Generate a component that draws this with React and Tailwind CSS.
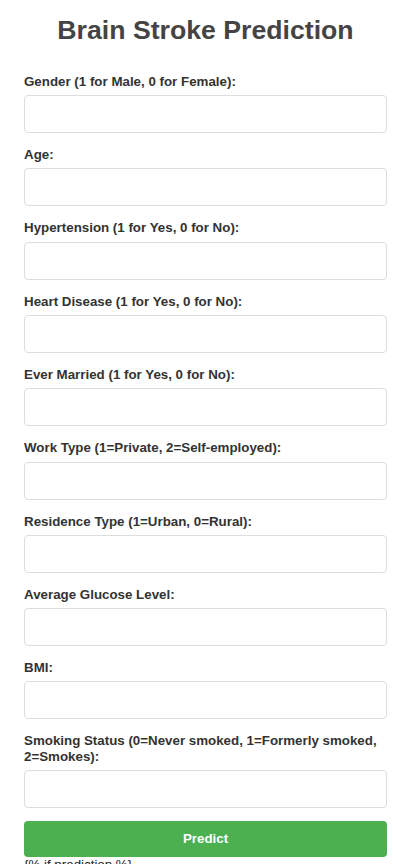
import React from "react";

const fields = [
  "Gender (1 for Male, 0 for Female):",
  "Age:",
  "Hypertension (1 for Yes, 0 for No):",
  "Heart Disease (1 for Yes, 0 for No):",
  "Ever Married (1 for Yes, 0 for No):",
  "Work Type (1=Private, 2=Self-employed):",
  "Residence Type (1=Urban, 0=Rural):",
  "Average Glucose Level:",
  "BMI:",
  "Smoking Status (0=Never smoked, 1=Formerly smoked, 2=Smokes):",
];

export default function App() {
  return (
    <div
      className="min-h-[864px] bg-white px-6 pt-[15px] text-[13.333px] leading-[1.15]"
      style={{ fontFamily: '"Liberation Sans", Arial, sans-serif' }}
    >
      <h1 className="mb-[28px] text-center text-[26.667px] font-bold leading-[1.15] text-[#444]">
        Brain Stroke Prediction
      </h1>
      <form className="flex flex-col" onSubmit={(e) => e.preventDefault()}>
        {fields.map((f) => (
          <div key={f} className="flex flex-col">
            <label className="mb-[6px] block font-bold leading-[1.15] text-[#333]">
              {f}
            </label>
            <input
              type="text"
              className="mb-[14px] h-[38px] w-full rounded-[4px] border border-[#dddddd] bg-white px-[8px] outline-none"
            />
          </div>
        ))}
        <button
          type="submit"
          className="-mt-px h-[36px] w-full rounded-[4px] bg-[#4CAF50] text-[13.333px] font-bold leading-[1.15] text-white"
        >
          Predict
        </button>
      </form>
      <div className="leading-[1.15] text-[#222]">{"{% if prediction %}"}</div>
    </div>
  );
}
